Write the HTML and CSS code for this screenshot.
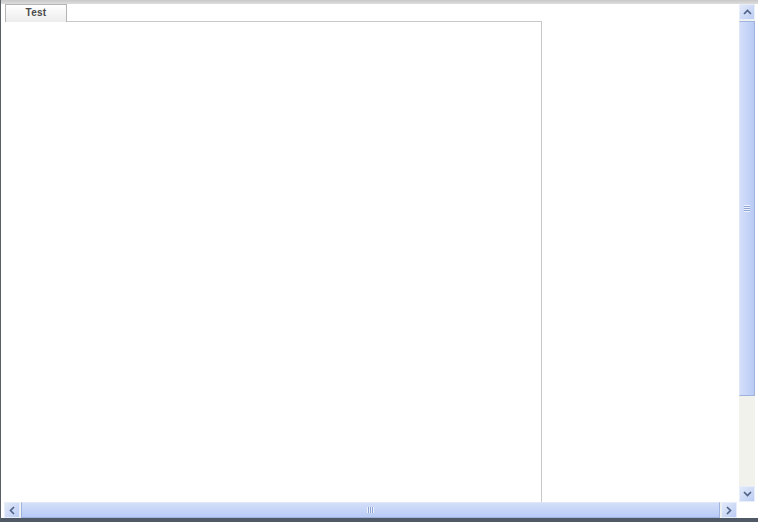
FILE: index.html
```html
<!DOCTYPE html>
<html>
<head>
<meta charset="utf-8">
<link rel="stylesheet" href="styles.css">
</head>
<body>
<div class="window">
  <div class="topband"></div>
  <div class="main">
    <div class="content">
      <div class="tabstrip">
        <div class="tab">Test</div>
        <div class="tabline"></div>
      </div>
      <div class="panel"></div>
    </div>
    <div class="vscroll">
      <div class="btn up"><svg width="9" height="6" viewBox="0 0 9 6"><path d="M1 5 L4.5 1.5 L8 5" fill="none" stroke="#4d6185" stroke-width="1.6"/></svg></div>
      <div class="vthumb"><span class="grip-v"></span></div>
      <div class="vtrack"></div>
      <div class="btn down"><svg width="9" height="6" viewBox="0 0 9 6"><path d="M1 1 L4.5 4.5 L8 1" fill="none" stroke="#4d6185" stroke-width="1.6"/></svg></div>
    </div>
  </div>
  <div class="hrow">
    <div class="hscroll">
      <div class="btn left"><svg width="6" height="9" viewBox="0 0 6 9"><path d="M5 1 L1.5 4.5 L5 8" fill="none" stroke="#4d6185" stroke-width="1.6"/></svg></div>
      <div class="hthumb"><span class="grip-h"></span></div>
      <div class="btn right"><svg width="6" height="9" viewBox="0 0 6 9"><path d="M1 1 L4.5 4.5 L1 8" fill="none" stroke="#4d6185" stroke-width="1.6"/></svg></div>
    </div>
    <div class="corner"></div>
  </div>
</div>
</body>
</html>
```

FILE: styles.css
```css
html, body {
  margin: 0;
  padding: 0;
  background: #ffffff;
  overflow: hidden;
}
.window {
  width: 757px;
  height: 518px;
  border-left: 1px solid #5a5f66;
  border-bottom: 4px solid #4f5a66;
  display: flex;
  flex-direction: column;
  background: #fff;
  font-family: "Liberation Sans", Arial, sans-serif;
}
.topband {
  height: 4px;
  background: linear-gradient(#c8c8c8, #dedede);
  flex: none;
}
.main {
  flex: 1;
  display: flex;
  min-height: 0;
}
.content {
  flex: 1;
  display: flex;
  flex-direction: column;
  min-width: 0;
}
.tabstrip {
  height: 18px;
  display: flex;
  align-items: flex-end;
  flex: none;
}
.tab {
  margin-left: 4px;
  width: 62px;
  height: 18px;
  border: 1px solid #b4b4b4;
  border-bottom: none;
  background: linear-gradient(#ffffff, #ececec);
  font-size: 10px;
  font-weight: bold;
  color: #4a4a4a;
  letter-spacing: 0.3px;
  text-align: center;
  line-height: 16px;
  box-sizing: border-box;
}
.tabline {
  width: 475px;
  height: 1px;
  background: #c8c8c8;
}
.panel {
  width: 541px;
  flex: 1;
  border-right: 1px solid #c8c8c8;
  box-sizing: border-box;
  background: #fff;
}
.vscroll {
  width: 16px;
  margin-right: 3px;
  display: flex;
  flex-direction: column;
  background: #f3f3ee;
}
.btn {
  flex: none;
  width: 16px;
  height: 16px;
  box-sizing: border-box;
  border: 1px solid #e8eef9;
  background: linear-gradient(135deg, #e2e9f9, #bccdf3);
  display: flex;
  align-items: center;
  justify-content: center;
}
.vthumb {
  height: 375px;
  box-sizing: border-box;
  border: 1px solid #9fb3de;
  border-left-color: #dfe6f8;
  background: linear-gradient(90deg, #d4def9, #b8cbf6);
  display: flex;
  align-items: center;
  justify-content: center;
  margin-top: 1px;
}
.grip-v {
  width: 6px;
  height: 7px;
  background: repeating-linear-gradient(#eef2fc 0 1px, #8ea4d6 1px 2px);
}
.vtrack {
  flex: 1;
  background: #f2f2ec;
}
.hrow {
  height: 16px;
  display: flex;
  flex: none;
}
.hscroll {
  flex: 1;
  display: flex;
  margin-left: 3px;
  background: #f3f3ee;
}
.hthumb {
  flex: 1;
  margin: 0 1px;
  box-sizing: border-box;
  border: 1px solid #9fb3de;
  border-top-color: #dfe6f8;
  background: linear-gradient(#d4def9, #b8cbf6);
  display: flex;
  align-items: center;
  justify-content: center;
}
.grip-h {
  width: 7px;
  height: 6px;
  background: repeating-linear-gradient(90deg, #eef2fc 0 1px, #8ea4d6 1px 2px);
}
.corner {
  width: 21px;
  background: #fff;
}
```
